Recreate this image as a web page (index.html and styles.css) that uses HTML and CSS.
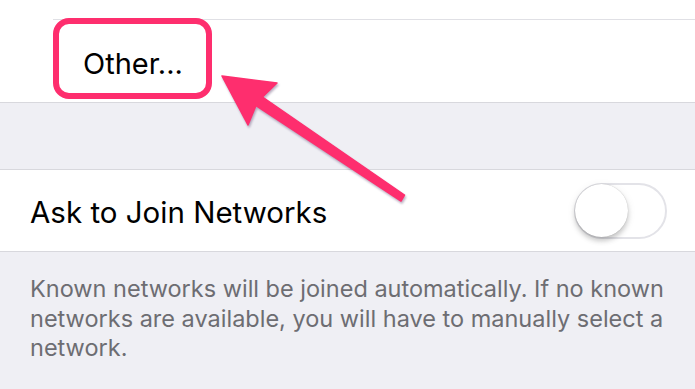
FILE: index.html
```html
<!DOCTYPE html>
<html>
<head>
<meta charset="utf-8">
<link rel="stylesheet" href="styles.css">
</head>
<body>
<div class="page">
  <section class="group group-top">
    <div class="row-prev"></div>
    <div class="row row-other"><span class="other-label">Other...</span></div>
  </section>
  <div class="gap"></div>
  <section class="group">
    <div class="row row-ask">
      <span class="ask-label">Ask to Join Networks</span>
      <span class="toggle"><span class="knob"></span></span>
    </div>
  </section>
  <p class="footer">Known networks will be joined automatically. If no known networks are available, you will have to manually select a network.</p>

  <div class="highlight"></div>
  <svg class="arrow" width="695" height="389" viewBox="0 0 695 389">
    <polygon points="222,76 277,83 262.5,97 404.5,195 401,201 256,105.5 248,125" fill="#fe2e6e" stroke="#fe2e6e" stroke-width="1.5" stroke-linejoin="round"/>
  </svg>
</div>
</body>
</html>
```

FILE: styles.css
```css
* { box-sizing: border-box; }
html, body { margin: 0; padding: 0; }
body {
  width: 695px;
  height: 389px;
  overflow: hidden;
  background: #efeff4;
  font-family: "Inter", "Liberation Sans", sans-serif;
}
.page {
  position: relative;
  width: 695px;
  height: 389px;
}
.group {
  background: #fff;
  border-top: 1px solid #d8d8dd;
  border-bottom: 1px solid #d8d8dd;
}
.group-top {
  border-top: none;
}
.row-prev {
  height: 20px;
  border-bottom: 1px solid #e0e0e5;
  margin-left: 53px;
}
.row-other {
  height: 82px;
  display: flex;
  align-items: center;
  padding-left: 83px;
}
.other-label {
  font-size: 29px;
  color: #000;
  padding-top: 4px;
}
.gap {
  height: 66px;
}
.row-ask {
  height: 81px;
  display: flex;
  align-items: center;
  justify-content: space-between;
  padding-left: 30px;
  padding-right: 28px;
}
.ask-label {
  font-size: 29.5px;
  color: #000;
  padding-top: 2px;
}
.toggle {
  width: 93px;
  height: 56px;
  border-radius: 28px;
  border: 2px solid #e3e3e8;
  background: #fff;
  position: relative;
  display: flex;
  align-items: center;
}
.knob {
  width: 53px;
  height: 53px;
  border-radius: 50%;
  background: #fff;
  margin-left: -1px;
  box-shadow: 0 4px 5px rgba(0,0,0,0.18), 0 0 1px rgba(0,0,0,0.25), 0 2px 10px rgba(0,0,0,0.08);
}
.footer {
  margin: 0;
  padding: 22px 20px 0 30px;
  font-size: 23.5px;
  line-height: 29.5px;
  color: #6d6d72;
}
.highlight {
  position: absolute;
  left: 53px;
  top: 18px;
  width: 159px;
  height: 81px;
  border: 6px solid #fe2e6e;
  border-radius: 16px;
}
.arrow {
  position: absolute;
  left: 0;
  top: 0;
  filter: drop-shadow(1px 2px 1px rgba(60,30,80,0.35));
}
```
